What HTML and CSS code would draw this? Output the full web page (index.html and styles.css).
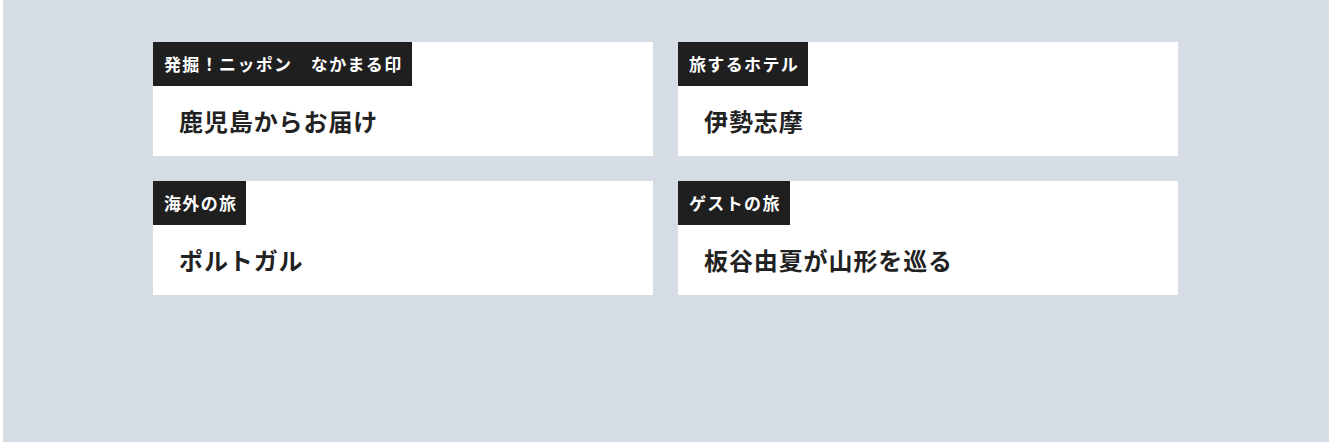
FILE: index.html
```html
<!DOCTYPE html>
<html lang="ja">
  <head>
    <meta charset="UTF-8" />
    <meta name="viewport" content="width=device-width, initial-scale=1.0" />
    <title>特集</title>
    <link rel="stylesheet" href="styles.css">
  </head>
  <body>
    <div class="page">
      <div class="cards">
        <a class="card" href="#">
          <span class="label">発掘！ニッポン　なかまる印</span>
          <span class="title">鹿児島からお届け</span>
        </a>
        <a class="card" href="#">
          <span class="label">旅するホテル</span>
          <span class="title">伊勢志摩</span>
        </a>
        <a class="card" href="#">
          <span class="label">海外の旅</span>
          <span class="title">ポルトガル</span>
        </a>
        <a class="card" href="#">
          <span class="label">ゲストの旅</span>
          <span class="title">板谷由夏が山形を巡る</span>
        </a>
      </div>
    </div>
  </body>
</html>
```

FILE: styles.css
```css
html {
  background: #fff;
}
body {
  margin: 0 0 0 3px;
  font-family: "Noto Sans CJK JP", "Noto Sans", sans-serif;
}
.page {
  background: #d6dce3;
  height: 442px;
  padding: 42px 0 0 150px;
  box-sizing: border-box;
}
.cards {
  display: grid;
  grid-template-columns: 500px 500px;
  grid-auto-rows: 114px;
  gap: 25px;
  width: 1025px;
}
.card {
  display: flex;
  flex-direction: column;
  align-items: flex-start;
  background: #fff;
  color: #222;
  text-decoration: none;
}
.label {
  background: #1f1f1f;
  color: #fff;
  font-size: 17px;
  font-weight: 700;
  letter-spacing: 1.35px;
  line-height: 44px;
  padding: 0 9px 0 11px;
}
.title {
  font-size: 24px;
  font-weight: 700;
  letter-spacing: 0.9px;
  line-height: 36px;
  padding: 17px 26px;
}
```
